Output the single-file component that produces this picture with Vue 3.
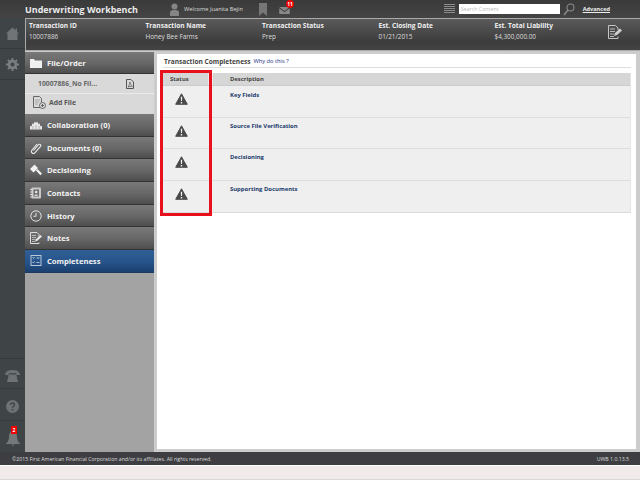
<script setup>
const fields = [
  { label: 'Transaction ID', value: '10007886', w: 116.5 },
  { label: 'Transaction Name', value: 'Honey Bee Farms', w: 116.5 },
  { label: 'Transaction Status', value: 'Prep', w: 116.5 },
  { label: 'Est. Closing Date', value: '01/21/2015', w: 116 },
  { label: 'Est. Total Liability', value: '$4,300,000.00', w: 113 }
]
const navTop = ['Collaboration (0)', 'Documents (0)', 'Decisioning', 'Contacts', 'History', 'Notes']
const rows = ['Key Fields', 'Source File Verification', 'Decisioning', 'Supporting Documents']
</script>

<template>
  <div class="app">
    <header class="top">
      <div class="brand">Underwriting Workbench</div>
      <svg class="user" width="9" height="13" viewBox="0 0 9 13"><circle cx="4.500" cy="3.500" r="3" fill="#858585"/><path d="M0 13V9.500C0 8 1.500 7 3 7h3c1.500 0 3 1 3 2.500V13z" fill="#858585"/></svg>
      <div class="welcome">Welcome Juanita Bejin</div>
      <svg class="bookmark" width="8" height="13" viewBox="0 0 8 13"><path d="M0 0h8v13L4 9.500 0 13z" fill="#777"/></svg>
      <div class="mail">
        <svg width="11" height="7" viewBox="0 0 12 8"><path d="M0 0h12L6 4.500z M0 1.500V8h12V1.500L6 6z" fill="#888"/></svg>
        <span class="mail-badge">11</span>
      </div>
      <div class="spacer"></div>
      <svg class="lines" width="11" height="10" viewBox="0 0 11 10"><path d="M0 .5h11M0 2.500h11M0 4.500h11M0 6.500h11M0 8.500h11" stroke="#8c8c8c"/></svg>
      <div class="search">Search Content</div>
      <svg class="lens" width="12" height="13" viewBox="0 0 12 13"><circle cx="7.500" cy="4.500" r="3.500" fill="none" stroke="#8a8a8a" stroke-width="1.100"/><path d="M5 7L1 12" stroke="#8a8a8a" stroke-width="1.500"/></svg>
      <a class="advanced">Advanced</a>
    </header>

    <div class="middle">
      <aside class="rail">
        <div class="rail-cell home">
          <svg width="13" height="13" viewBox="0 0 13 13"><path d="M6.500 .5L0 6.500h1.500V13h10V6.500H13l-2-1.900V1.500H9.500v1.700z" fill="#707476"/></svg>
        </div>
        <div class="rail-cell gear">
          <svg width="13" height="13" viewBox="0 0 14 14"><circle cx="7" cy="7" r="3.700" fill="none" stroke="#7a7e80" stroke-width="3"/><path d="M7 0v14M0 7h14M2 2l10 10M12 2L2 12" stroke="#7a7e80" stroke-width="2" stroke-dasharray="2.200 9.600 2.200"/></svg>
        </div>
        <div class="rail-fill"></div>
        <div class="rail-cell phone">
          <svg width="15" height="12" viewBox="0 0 16 13"><path d="M0 4C1 1 4 0 8 0s7 1 8 4v1.500h-4V3.500H4v2H0z M4 5h8l2 8H2z" fill="#6e7274"/></svg>
        </div>
        <div class="rail-cell help">
          <svg width="13" height="13" viewBox="0 0 13 13"><circle cx="6.500" cy="6.500" r="6.500" fill="#6e7274"/><path d="M4.500 5c0-1.300 1-2 2-2s2 .7 2 1.800c0 1.400-2 1.400-2 3" fill="none" stroke="#3f4447" stroke-width="1.400"/><rect x="5.700" y="9" width="1.600" height="1.600" fill="#3f4447"/></svg>
        </div>
        <div class="rail-cell bell">
          <svg width="14" height="15" viewBox="0 0 14 15"><path d="M7 0c3 0 4 3 4 6 0 3 1 5 3 6.500V13H0v-.5C2 11 3 9 3 6c0-3 1-6 4-6z M5.500 13.500h3L7 15z" fill="#74787a"/></svg>
          <span class="bell-badge">2</span>
        </div>
      </aside>

      <div class="main">
        <section class="txbar">
          <div v-for="f in fields" :key="f.label" class="tx-field" :style="{ width: f.w + 'px' }">
            <div class="tx-label">{{ f.label }}</div>
            <div class="tx-value">{{ f.value }}</div>
          </div>
          <svg class="tx-icon" width="14" height="14" viewBox="0 0 14 14"><path d="M10 5V3L7.500.5H.5v13H10v-2" fill="none" stroke="#c4c4c4"/><path d="M2 4h5M2 6.500h5M2 9h4M2 11.500h4" stroke="#bbb"/><path d="M6 11l1-3 5-4.500 2 2L9 10z" fill="#d0d0d0"/></svg>
        </section>

        <div class="body">
          <nav class="side">
            <div class="nav-item first">
              <svg class="nav-ic" width="12" height="10" viewBox="0 0 12 10"><path d="M0 1h4l1 1.500h7V10H0z" fill="#f0f0f0"/></svg>
              <span>File/Order</span>
            </div>
            <div class="file-panel">
              <div class="file-row">
                <span class="file-name">10007886_No Fil...</span>
                <svg width="8" height="10" viewBox="0 0 8 10"><path d="M.5.500h4.500l2.500 2.500v6.500h-7z" fill="none" stroke="#555"/><path d="M2 8c1-1 1.500-3 2-5 .5 2 1 3 2.500 4.500C5 7 3 7.500 2 8z" fill="none" stroke="#555" stroke-width=".7"/></svg>
              </div>
              <div class="add-row">
                <svg width="13" height="13" viewBox="0 0 13 13"><path d="M7 11.500H.500V.500h6l2 2V6" fill="none" stroke="#666"/><path d="M2 4h5M2 6h4M2 8h3" stroke="#999" stroke-width=".8"/><circle cx="9.500" cy="9.500" r="3" fill="none" stroke="#666"/><path d="M8 9.500h3M9.500 8v3" stroke="#666"/></svg>
                <span>Add File</span>
              </div>
            </div>
            <div v-for="(n, i) in navTop" :key="n" class="nav-item">
              <svg class="nav-ic" width="12" height="12" viewBox="0 0 12 12">
                <template v-if="i === 0">
                  <path d="M0 10.500V7.500l1-1 1 1V5.500l1-1.500 1 1.500V4l1-1.500L6 4l1-1.500L8 4v1.500L9 4l1 1.500v2l1-1 1 1v3z" fill="#e8e8e8"/>
                  <path d="M3 10V7M6 10V6M9 10V7" stroke="#888" stroke-width=".6"/>
                </template>
                <path v-else-if="i === 1" d="M3.500 8.500L8.300 2.800c1.300-1.500 3.300.2 2 1.800L4.800 10.800C3.200 12.600.3 10.200 1.800 8.400L7 2" fill="none" stroke="#e8e8e8" stroke-width="1.100"/>
                <path v-else-if="i === 2" d="M0 5L4.500 .5l3.500 3.500L3.500 8.500z M6 6.500l1.500-1.500 4.500 4.500-1.700 1.700z" fill="#f2f2f2"/>
                <template v-else-if="i === 3">
                  <rect x="1.500" y=".5" width="9.500" height="11" rx="1" fill="#c9c9c9"/>
                  <rect x="3.500" y="2.500" width="5.500" height="7" fill="#6b6b6b"/>
                  <circle cx="6.200" cy="5" r="1.300" fill="#e6e6e6"/>
                  <path d="M4.200 8.800c.3-1.700 3.700-1.700 4 0z" fill="#e6e6e6"/>
                  <path d="M0 2.500h2.500M0 5h2.500M0 7.500h2.500M0 10h2.500" stroke="#eee" stroke-width=".8"/>
                </template>
                <template v-else-if="i === 4"><circle cx="6" cy="6" r="5.200" fill="none" stroke="#e0e0e0"/><path d="M6 3v3.300H3.500" fill="none" stroke="#e0e0e0"/></template>
                <template v-else>
                  <path d="M9 5V2.500L7 .5H.5v11H9v-1" fill="none" stroke="#ddd"/>
                  <path d="M2 3.500h4M2 5.500h4M2 7.500h3M2 9.500h3" stroke="#ccc" stroke-width=".8"/>
                  <path d="M5 9.500l.8-2.300L10.500 3 12 4.500 7.300 8.800z" fill="#e8e8e8"/>
                </template>
              </svg>
              <span>{{ n }}</span>
            </div>
            <div class="nav-item active">
              <svg class="nav-ic" width="11" height="11" viewBox="0 0 11 11"><rect x=".5" y=".5" width="10" height="10" fill="none" stroke="#b9c8da"/><path d="M2 2.500l1 1 1-1.500M2 7l1 1 1-1.500M6 3h3M6 7.500h3" fill="none" stroke="#d0dae6" stroke-width=".8"/></svg>
              <span>Completeness</span>
            </div>
            <div class="side-fill"></div>
          </nav>

          <main class="content">
            <div class="title-row">
              <span class="title">Transaction Completeness</span>
              <a class="why">Why do this ?</a>
            </div>
            <div class="table-wrap">
              <div class="thead">
                <div class="col-status">Status</div>
                <div class="col-desc">Description</div>
              </div>
              <div v-for="(r, i) in rows" :key="r" class="trow" :class="{ last: i === 3, first: i === 0 }">
                <div class="cell-status">
                  <svg width="13" height="12" viewBox="0 0 13 12"><path d="M6.500 .8L12.300 11.300H.7z" fill="#4a4a4a" stroke="#4a4a4a" stroke-linejoin="round"/><path d="M5.800 3.800h1.400l-.2 4.200H6z M5.800 9h1.400v1.400H5.800z" fill="#f0f0f0"/></svg>
                </div>
                <div class="cell-desc">{{ r }}</div>
              </div>
              <div class="red-box"></div>
            </div>
          </main>
        </div>
      </div>
    </div>

    <footer class="foot">
      <span>©2015 First American Financial Corporation and/or its affiliates. All rights reserved.</span>
      <span>UWB 1.0.13.5</span>
    </footer>
    <div class="status-strip"></div>
  </div>
</template>

<style>
html, body { margin: 0; padding: 0; background: #3f4447; }
</style>

<style scoped>
.app {
  width: 640px; height: 480px; overflow: hidden;
  display: flex; flex-direction: column;
  font-family: "Open Sans", "Liberation Sans", sans-serif;
}
.top {
  height: 18px; flex: none;
  display: flex; align-items: center;
  background: linear-gradient(#3a3a3a, #444);
  color: #eee;
}
.brand { margin-left: 25px; width: 145px; font-size: 8.950px; font-weight: 700; white-space: nowrap; color: #ececec; }
.user { flex: none; }
.welcome { margin-left: 5px; width: 75px; font-size: 5.700px; color: #ddd; white-space: nowrap; }
.bookmark { flex: none; }
.mail { position: relative; margin-left: 12px; display: flex; margin-top: 3px; }
.mail-badge {
  position: absolute; left: 7px; top: -7px; width: 8px; height: 8px; border-radius: 50%;
  background: #e00; color: #fff; font-size: 5px; font-weight: 700; line-height: 8px; text-align: center;
}
.spacer { flex: 1; }
.lines { margin-right: 4px; }
.search {
  width: 101px; height: 10px; background: #fff; color: #bbb; font-size: 5.300px;
  line-height: 10px; padding-left: 2px; box-sizing: border-box;
}
.lens { margin-left: 3px; }
.advanced { margin-left: 8px; margin-right: 30px; font-size: 5.600px; font-weight: 700; color: #eee; text-decoration: underline; }

.middle { flex: 1; display: flex; min-height: 0; }
.rail { width: 25px; flex: none; background: #3f4447; display: flex; flex-direction: column; }
.rail-cell { display: flex; align-items: center; justify-content: center; position: relative; border-bottom: 1px solid #35393b; box-sizing: border-box; }
.home { height: 31px; }
.gear { height: 31px; }
.rail-fill { flex: 1; }
.phone { height: 31px; border-top: 1px solid #35393b; padding-top: 4px; }
.help { height: 32px; padding-top: 4px; }
.bell { height: 31px; border-bottom: 0; padding-top: 3px; }
.bell-badge {
  position: absolute; left: 11px; top: 5px; width: 6px; height: 8px;
  background: #e00; color: #fff; font-size: 5px; font-weight: 700; line-height: 8px; text-align: center;
}

.main { flex: 1; min-width: 0; display: flex; flex-direction: column; }
.txbar {
  height: 33px; flex: none; box-sizing: border-box;
  display: flex; padding: 2px 0 0 3px;
  border: 1px solid #aaa; border-right: 0;
  background: linear-gradient(#5a5a5a, #484848 45%, #3c3c3c 75%, #444);
  color: #eee;
}
.tx-field { flex: none; }
.tx-label { font-size: 6.600px; font-weight: 700; line-height: 10px; color: #eee; }
.tx-value { font-size: 6.400px; line-height: 12px; color: #ddd; }
.tx-icon { margin-top: 4px; }

.body { flex: 1; min-height: 0; display: flex; background: #ccc; padding-top: 1px; }
.side { width: 129px; flex: none; display: flex; flex-direction: column; background: #a3a3a3; }
.nav-item {
  height: 22.700px; flex: none; box-sizing: border-box;
  display: flex; align-items: center; padding-left: 3px; gap: 5px;
  background: linear-gradient(#797979, #666 55%, #4e4e4e);
  border-bottom: 1px solid #333;
  color: #f2f2f2; font-size: 7.600px; font-weight: 700;
}
.nav-ic { width: 12px; flex: none; margin-left: 2px; }
.first { height: 22px; }
.active { background: linear-gradient(#2f5f96, #27548a 55%, #1b3f6e); border-bottom-color: #1b3a62; }
.file-panel { height: 40px; flex: none; background: #d9d9d9; box-sizing: border-box; color: #555; font-size: 6.800px; font-weight: 700; }
.file-row { height: 20px; display: flex; align-items: center; justify-content: space-between; padding: 0 20px 0 13px; border-bottom: 1px solid #eaeaea; box-sizing: border-box; }
.file-name { color: #666; font-size: 6.800px; }
.add-row { height: 19px; display: flex; align-items: center; gap: 3px; padding: 0 0 2px 8px; box-sizing: border-box; }
.side-fill { flex: 1; }

.content {
  flex: 1; min-width: 0; background: #fff; margin: 2px 4px 3px 3px; padding: 0 5px 0 6px; box-sizing: border-box;
  min-height: 0;
}
.title-row {
  height: 14px; display: flex; align-items: center; gap: 3px; border-bottom: 1px solid #ddd; box-sizing: border-box;
  padding: 2px 0 0 1px;
}
.title { font-size: 6.550px; font-weight: 700; color: #444; }
.why { font-size: 5.700px; color: #1c2f80; margin-top: -2px; }
.table-wrap { position: relative; margin-top: 5px; background: #efefef; border-right: 1px solid #e2e6e4; border-bottom: 1px solid #d8dcda; }
.thead { height: 13px; display: flex; background: #d6d6d6; border-bottom: 1px solid #ccc; box-sizing: border-box; font-size: 5.900px; font-weight: 700; color: #444; line-height: 13px; }
.col-status { width: 50px; padding-left: 7px; box-sizing: border-box; border-right: 5px solid #e9e9e9; }
.col-desc { padding-left: 17px; }
.trow { height: 31.500px; display: flex; border-bottom: 1px solid #ddd; box-sizing: border-box; }
.trow.last { border-bottom: 0; }
.cell-status { width: 50px; padding: 7px 0 0 12px; box-sizing: border-box; }
.cell-status svg { display: block; }
.cell-desc { padding: 4.400px 0 0 17px; font-size: 5.900px; font-weight: 700; color: #1b3a6b; }
.trow.first .cell-desc { padding-top: 5.400px; }
.red-box {
  position: absolute; left: -3px; top: -3px; width: 52px; height: 146px; box-sizing: border-box;
  border: 3px solid #e8101c;
}

.foot {
  height: 13px; flex: none; background: #3e3e42; color: #ddd; font-size: 5.200px;
  display: flex; align-items: center; justify-content: space-between; padding: 0 11px 0 12px;
}
.status-strip { height: 15px; flex: none; background: #f1eaea; border-top: 1px solid #fff; border-bottom: 1px solid #d8d8d8; box-sizing: border-box; }
</style>
